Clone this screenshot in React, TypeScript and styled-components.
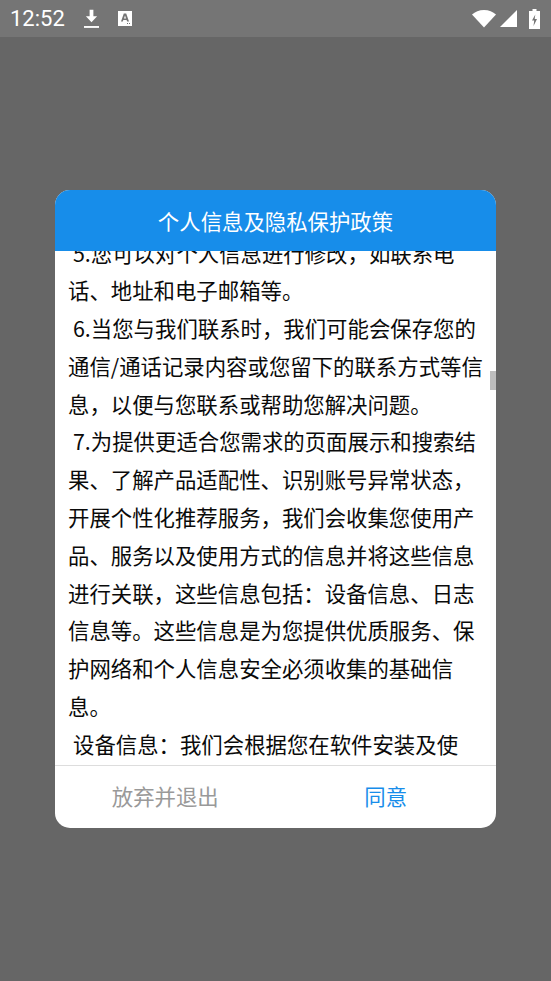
import React from "react";
import styled, { createGlobalStyle } from "styled-components";

const GlobalStyle = createGlobalStyle`
  html, body {
    margin: 0;
    padding: 0;
    background: #666666;
  }
`;

const Screen = styled.div`
  width: 551px;
  height: 981px;
  display: flex;
  flex-direction: column;
  background: #666666;
  font-family: "Noto Sans CJK SC", "Noto Sans", sans-serif;
  overflow: hidden;
`;

const StatusBar = styled.div`
  height: 37px;
  flex: none;
  display: flex;
  align-items: center;
  padding: 0 11px 0 10px;
  background: #757575;
  color: #ffffff;
`;

const Clock = styled.span`
  font-family: Roboto, sans-serif;
  font-size: 22px;
  margin-right: 19px;
`;

const StatusIcon = styled.svg<{ $gap?: number }>`
  display: block;
  flex: none;
  margin-right: ${(p) => p.$gap ?? 0}px;
`;

const Spacer = styled.div`
  flex: 1;
`;

const Overlay = styled.div`
  flex: 1;
  padding: 153px 55px 0;
`;

const Dialog = styled.div`
  height: 638px;
  border-radius: 15px;
  background: #ffffff;
  overflow: hidden;
  display: flex;
  flex-direction: column;
`;

const Header = styled.div`
  height: 61px;
  flex: none;
  display: flex;
  align-items: center;
  justify-content: center;
  background: #178dea;
  color: #ffffff;
  font-size: 21.4px;
`;

const Body = styled.div`
  position: relative;
  height: 514px;
  flex: none;
  overflow: hidden;
`;

const Content = styled.div`
  margin-top: -17.5px;
  padding: 0 13px;
  color: #0a0a0a;
  font-size: 21.4px;
  line-height: 37.8px;
`;

const Para = styled.p`
  margin: 0;
  text-indent: 5px;
`;

const Thumb = styled.div`
  position: absolute;
  top: 120px;
  right: 0;
  width: 6px;
  height: 19px;
  background: #bdbdbd;
`;

const Footer = styled.div`
  flex: 1;
  display: flex;
  padding-bottom: 3px;
  border-top: 1px solid #dddddd;
`;

const Action = styled.div<{ $primary?: boolean }>`
  flex: 1;
  display: flex;
  align-items: center;
  justify-content: center;
  font-size: 21.4px;
  color: ${(p) => (p.$primary ? "#178dea" : "#999999")};
`;

export default function App() {
  return (
    <Screen>
      <GlobalStyle />
      <StatusBar>
        <Clock>12:52</Clock>
        <StatusIcon $gap={19} width="15" height="20" viewBox="0 0 16 20">
          <path d="M6 0h4v7h4l-6 6.5L2 7h4z" fill="#fff" />
          <rect x="0" y="17.500" width="16" height="2" fill="#fff" />
        </StatusIcon>
        <StatusIcon width="14" height="15" viewBox="0 0 14 15">
          <path
            fillRule="evenodd"
            d="M0 0h14v15H0zM5.800 2.500L3 10.500h1.800l.5-1.500h3.300l.5 1.500H11L8.200 2.500zM6 7.500L7 4.500 8 7.500zM9 12h1v1H9zM11 12h1v1h-1z"
            fill="#fff"
          />
        </StatusIcon>
        <Spacer />
        <StatusIcon $gap={4} width="24" height="18" viewBox="0 0 24 18">
          <path d="M0 4.500C3 1.800 7.200 0 12 0s9 1.800 12 4.500L12 17.500z" fill="#fff" />
        </StatusIcon>
        <StatusIcon $gap={12} width="17" height="17" viewBox="0 0 17 17">
          <path d="M17 0v17H0z" fill="#fff" />
        </StatusIcon>
        <StatusIcon width="11" height="20" viewBox="0 0 11 20">
          <path
            fillRule="evenodd"
            d="M3.500 0h4v2H11v18H0V2h3.500zM6.300 5.500L3 11.500h2.200L4.500 17 8 10h-2.300z"
            fill="#fff"
          />
        </StatusIcon>
      </StatusBar>
      <Overlay>
        <Dialog>
          <Header>个人信息及隐私保护政策</Header>
          <Body>
            <Content>
              <Para>
                5.您可以对个人信息进行修改，如联系电
                <br />
                话、地址和电子邮箱等。
              </Para>
              <Para>6.当您与我们联系时，我们可能会保存您的通信/通话记录内容或您留下的联系方式等信息，以便与您联系或帮助您解决问题。</Para>
              <Para>7.为提供更适合您需求的页面展示和搜索结果、了解产品适配性、识别账号异常状态，开展个性化推荐服务，我们会收集您使用产品、服务以及使用方式的信息并将这些信息进行关联，这些信息包括：设备信息、日志信息等。这些信息是为您提供优质服务、保护网络和个人信息安全必须收集的基础信息。</Para>
              <Para>
                设备信息：我们会根据您在软件安装及使
                <br />
                用过程中的设备型号及授权信息。
              </Para>
            </Content>
            <Thumb />
          </Body>
          <Footer>
            <Action>放弃并退出</Action>
            <Action $primary>同意</Action>
          </Footer>
        </Dialog>
      </Overlay>
    </Screen>
  );
}
